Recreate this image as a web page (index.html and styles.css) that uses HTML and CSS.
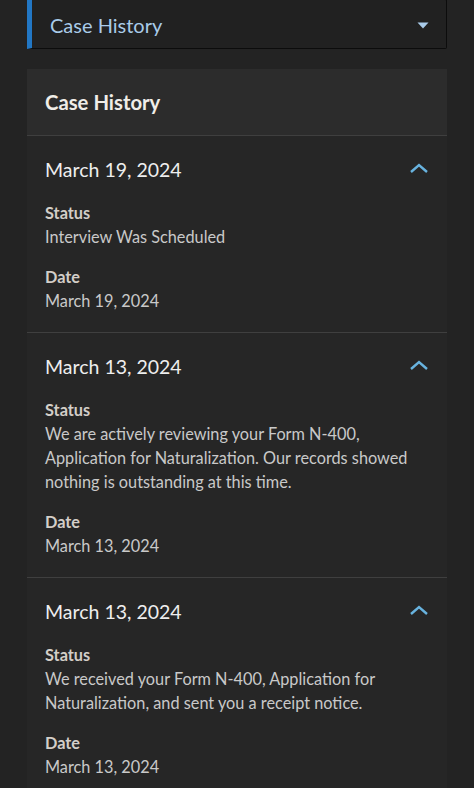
FILE: index.html
```html
<!DOCTYPE html>
<html lang="en">
<head>
  <meta charset="UTF-8" />
  <meta name="viewport" content="width=device-width, initial-scale=1.0" />
  <title>Case History</title>
  <link rel="stylesheet" href="styles.css">
</head>
<body>

  <div class="picker">
    <span class="picker-label">Case History</span>
    <svg class="caret" width="12" height="7" viewBox="0 0 12 7"><path d="M0.5 0.5 H11.5 L6 6.5 Z" fill="#a9cbe9"/></svg>
  </div>

  <div class="card">
    <div class="card-head">Case History</div>

    <div class="entry">
      <div class="entry-top">
        <span class="entry-date">March 19, 2024</span>
        <svg class="chevron" width="20" height="12" viewBox="0 0 20 12"><path d="M2 10 L10 3 L18 10" fill="none" stroke="#68b3df" stroke-width="2.4"/></svg>
      </div>
      <div class="field">
        <div class="field-name">Status</div>
        <div class="field-value">Interview Was Scheduled</div>
      </div>
      <div class="field">
        <div class="field-name">Date</div>
        <div class="field-value">March 19, 2024</div>
      </div>
    </div>

    <div class="entry">
      <div class="entry-top">
        <span class="entry-date">March 13, 2024</span>
        <svg class="chevron" width="20" height="12" viewBox="0 0 20 12"><path d="M2 10 L10 3 L18 10" fill="none" stroke="#68b3df" stroke-width="2.4"/></svg>
      </div>
      <div class="field">
        <div class="field-name">Status</div>
        <div class="field-value">We are actively reviewing your Form N-400, Application for Naturalization. Our records showed nothing is outstanding at this time.</div>
      </div>
      <div class="field">
        <div class="field-name">Date</div>
        <div class="field-value">March 13, 2024</div>
      </div>
    </div>

    <div class="entry">
      <div class="entry-top">
        <span class="entry-date">March 13, 2024</span>
        <svg class="chevron" width="20" height="12" viewBox="0 0 20 12"><path d="M2 10 L10 3 L18 10" fill="none" stroke="#68b3df" stroke-width="2.4"/></svg>
      </div>
      <div class="field">
        <div class="field-name">Status</div>
        <div class="field-value">We received your Form N-400, Application for Naturalization, and sent you a receipt notice.</div>
      </div>
      <div class="field">
        <div class="field-name">Date</div>
        <div class="field-value">March 13, 2024</div>
      </div>
    </div>
  </div>

</body>
</html>
```

FILE: styles.css
```css
body {
  margin: 0;
  padding: 0 27px;
  background-color: #232323;
  font-family: Lato, "Liberation Sans", sans-serif;
  color: #e6e6e6;
}
.picker {
  height: 48px;
  margin-top: -1px;
  display: flex;
  align-items: center;
  justify-content: space-between;
  padding: 0 17px 0 18px;
  background-color: #212121;
  border: 1px solid #0c0c0c;
  border-left: 5px solid #2277c4;
  border-radius: 0 2px 2px 0;
}
.picker-label {
  font-size: 20px;
  padding-top: 2px;
  color: #a9cbe9;
}
.caret {
  margin-top: 3px;
}
.card {
  margin-top: 20px;
  background-color: #262626;
}
.card-head {
  background-color: #2c2c2c;
  padding: 20px 18px;
  line-height: 26px;
  font-size: 20.3px;
  font-weight: bold;
  color: #f0ede8;
  border-bottom: 1px solid #3f3f3f;
}
.entry {
  padding: 20px 18px 19px;
  border-bottom: 1px solid #3f3f3f;
}
.entry-top {
  display: flex;
  align-items: center;
  justify-content: space-between;
  margin-bottom: 17px;
}
.entry-date {
  font-size: 19.5px;
  line-height: 28px;
  color: #eeeeee;
}
.chevron {
  margin-right: 0;
  margin-top: -4px;
}
.field {
  font-size: 16.3px;
  line-height: 24px;
}
.field + .field {
  margin-top: 16px;
}
.field-name {
  font-weight: bold;
  color: #d3cec8;
}
.field-value {
  color: #c9c9c9;
}
```
